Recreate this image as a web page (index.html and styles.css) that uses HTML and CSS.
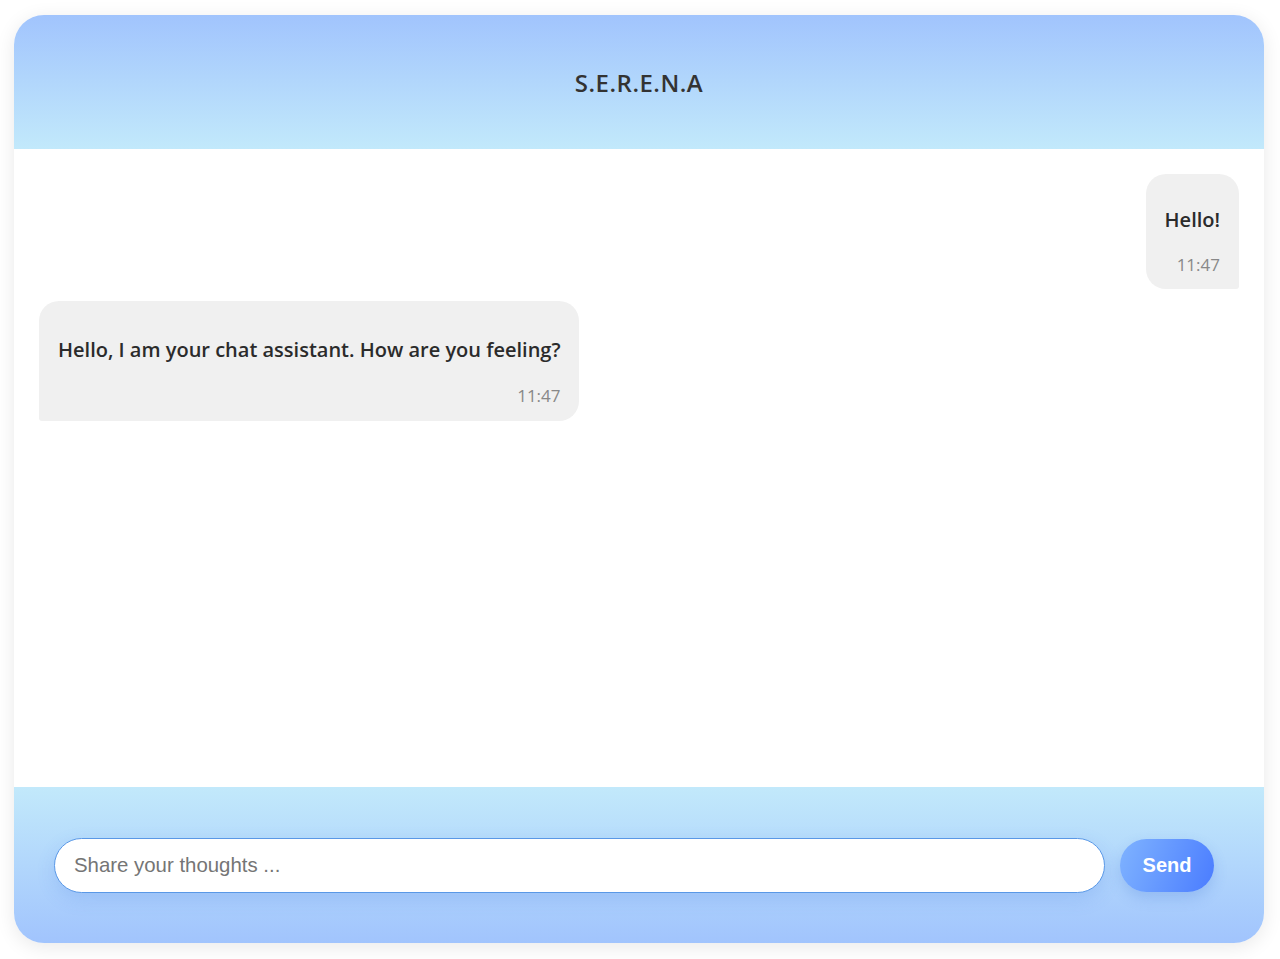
FILE: index.html
```html
<!DOCTYPE html>
<html lang="en">
<head>
<meta charset="utf-8">
<title>S.E.R.E.N.A</title>
<link rel="stylesheet" href="styles.css">
</head>
<body>
<div class="chat">
  <header class="chat-header">
    <h1 class="chat-title">S.E.R.E.N.A</h1>
  </header>
  <main class="messages">
    <div class="bubble bubble-user">
      <div class="bubble-text">Hello!</div>
      <div class="bubble-time">11:47</div>
    </div>
    <div class="bubble bubble-bot">
      <div class="bubble-text">Hello, I am your chat assistant. How are you feeling?</div>
      <div class="bubble-time">11:47</div>
    </div>
  </main>
  <footer class="chat-footer">
    <input class="chat-input" type="text" placeholder="Share your thoughts ...">
    <button class="send-btn" type="button">Send</button>
  </footer>
</div>
</body>
</html>
```

FILE: styles.css
```css
* { box-sizing: border-box; }

html, body { height: 100%; }

body {
  margin: 0;
  padding: 15px 16px 16px 14px;
  background: #ffffff;
  font-family: "Open Sans", "Noto Sans", sans-serif;
}

.chat {
  height: 928px;
  display: flex;
  flex-direction: column;
  border-radius: 30px;
  overflow: hidden;
  background: #ffffff;
  box-shadow: 0 4px 20px rgba(0, 0, 0, 0.09);
}

.chat-header {
  height: 134px;
  flex: none;
  display: flex;
  align-items: center;
  justify-content: center;
  background: linear-gradient(to bottom, #a1c4fd, #c2e9fb);
}

.chat-title {
  margin: 0;
  font-family: "Open Sans", sans-serif;
  font-size: 24px;
  font-weight: 600;
  letter-spacing: 0.5px;
  color: #333333;
}

.messages {
  flex: 1;
  display: flex;
  flex-direction: column;
  align-items: flex-start;
  gap: 12px;
  padding: 25px;
  background: #ffffff;
}

.bubble {
  background: #f0f0f0;
  padding: 32px 19px 13px;
  border-radius: 20px;
  color: #2b2b2b;
}

.bubble-user {
  align-self: flex-end;
  border-bottom-right-radius: 3px;
}

.bubble-bot {
  align-self: flex-start;
  border-bottom-left-radius: 3px;
  padding-top: 35px;
  padding-bottom: 14px;
  padding-right: 18px;
}

.bubble-text {
  font-size: 20px;
  font-weight: 600;
  line-height: 27px;
}

.bubble-time {
  margin-top: 21px;
  text-align: right;
  font-size: 17px;
  line-height: 22px;
  color: #888888;
}

.bubble-bot .bubble-time {
  margin-top: 22px;
}

.chat-footer {
  height: 156px;
  flex: none;
  display: flex;
  align-items: center;
  gap: 15px;
  padding: 1px 50px 0 40px;
  background: linear-gradient(to bottom, #c2e9fb, #a1c4fd);
}

.chat-input {
  flex: 1;
  height: 55px;
  padding: 0 19px;
  border: 1px solid #5a98e6;
  border-radius: 28px;
  background: #ffffff;
  font-family: "Liberation Sans", Arial, sans-serif;
  font-size: 20.4px;
  color: #333333;
  outline: none;
  box-shadow: 0 6px 18px rgba(74, 124, 220, 0.18);
}

.chat-input::placeholder {
  color: #757575;
}

.send-btn {
  width: 94px;
  height: 53px;
  border: none;
  border-radius: 27px;
  background: linear-gradient(110deg, #7fb3ff, #4a7cff);
  color: #ffffff;
  font-family: "Liberation Sans", Arial, sans-serif;
  font-size: 20px;
  font-weight: 700;
  cursor: pointer;
  box-shadow: 0 6px 14px rgba(60, 110, 210, 0.22);
}
```
